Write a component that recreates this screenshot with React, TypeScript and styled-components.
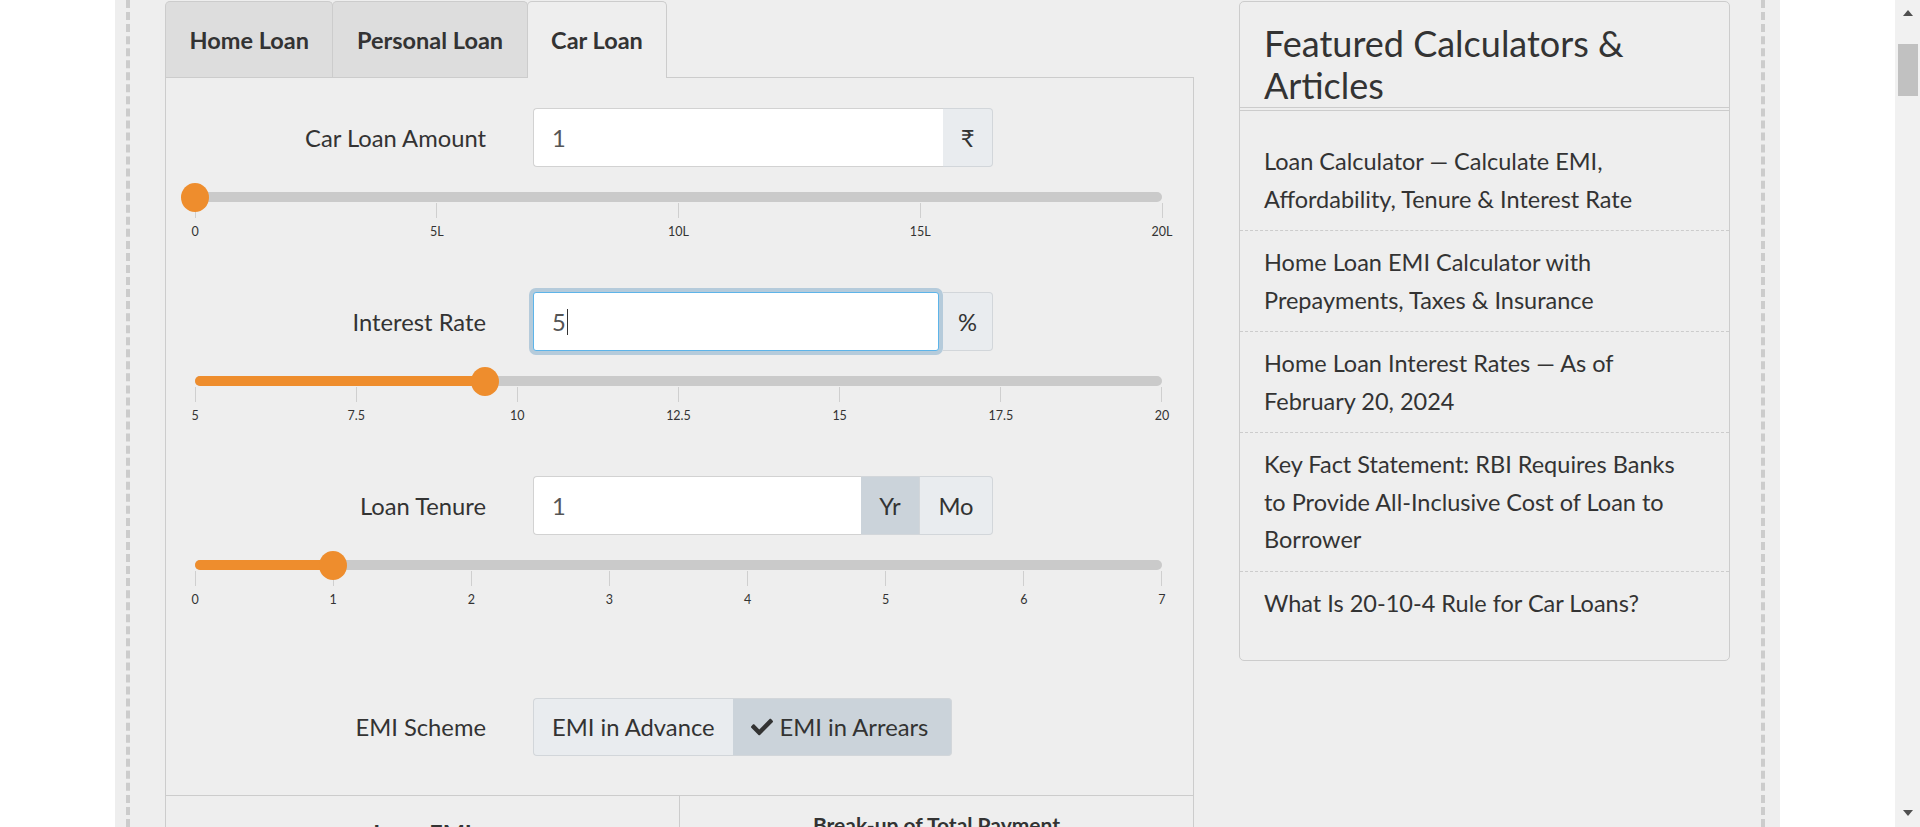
import React from 'react'
import styled, { createGlobalStyle, css } from 'styled-components'
import { FaCheck } from 'react-icons/fa'

const GlobalStyle = createGlobalStyle`
  html, body {
    margin: 0;
    padding: 0;
    height: 100%;
    overflow: hidden;
    background: #ffffff;
  }
  body {
    font-family: Lato, 'Noto Sans', 'DejaVu Sans', sans-serif;
    color: #333333;
  }
  * {
    box-sizing: border-box;
  }
`

const accent = '#ee8d2d'
const line = '#cccccc'

const Screen = styled.div`
  display: flex;
  width: 1920px;
  height: 827px;
  overflow: hidden;
`

const Viewport = styled.div`
  flex: 1;
  min-width: 0;
  display: flex;
  justify-content: center;
`

const Wrapper = styled.div`
  width: 1665px;
  height: 100%;
  background: #eeeeee;
  padding: 0 15px 0 11px;
`

const Inner = styled.div`
  height: 100%;
  display: flex;
  align-items: flex-start;
  gap: 45px;
  padding: 1px 31px 0 35px;
  border-left: 4px dashed ${line};
  border-right: 4px dashed ${line};
`

const Main = styled.section`
  width: 1029px;
  flex-shrink: 0;
`

const Tabs = styled.ul`
  display: flex;
  margin: 0;
  padding: 0;
  list-style: none;
`

const Tab = styled.li<{ $active?: boolean }>`
  position: relative;
  display: flex;
  align-items: center;
  height: 76px;
  padding: 0 23.5px;
  margin-right: -1px;
  font-size: 23.5px;
  font-weight: 700;
  color: #333;
  background: #dddddd;
  border: 1px solid ${line};
  border-bottom: none;
  border-radius: 5px 5px 0 0;

  ${props =>
    props.$active &&
    css`
      z-index: 1;
      height: 77px;
      margin-bottom: -1px;
      background: #eeeeee;
    `}
`

const Panel = styled.div`
  border: 1px solid ${line};
  border-bottom: none;
  padding-top: 30px;
`

const Control = styled.div`
  margin-bottom: 52px;
`

const FormRow = styled.div<{ $offset?: number }>`
  display: grid;
  grid-template-columns: 320px 460px;
  column-gap: 47px;
  align-items: center;
  margin-top: ${props => props.$offset || 0}px;
`

const Label = styled.label`
  text-align: right;
  font-size: 23.75px;
  color: #333;
`

const InputGroup = styled.div`
  display: flex;
  height: 59px;
`

const Field = styled.div<{ $focused?: boolean }>`
  flex: 1;
  display: flex;
  align-items: center;
  padding: 0 18px;
  font-size: 23.75px;
  color: #555;
  background: #ffffff;
  border: 1px solid #d2d2d2;
  border-right: none;
  border-radius: 4px 0 0 4px;

  ${props =>
    props.$focused &&
    css`
      position: relative;
      z-index: 1;
      margin-right: 4px;
      border: 1px solid #5db4e9;
      border-radius: 3px;
      box-shadow: 0 0 0 4px rgba(110, 160, 195, 0.45);
    `}
`

const Caret = styled.span`
  display: inline-block;
  width: 1px;
  height: 26px;
  margin-left: 1px;
  background: #333;
`

const Addon = styled.div<{ $width: number; $active?: boolean; $last?: boolean }>`
  display: flex;
  align-items: center;
  justify-content: center;
  width: ${props => props.$width}px;
  font-size: 23.75px;
  color: #333;
  background: ${props => (props.$active ? '#cbd3da' : '#e9ecef')};
  border: 1px solid #d2d6da;
  border-left: none;
  ${props =>
    props.$last &&
    css`
      border-radius: 0 4px 4px 0;
    `}
`

const Slider = styled.div`
  padding: 0 31px 0 29px;
`

const Track = styled.div`
  position: relative;
  height: 10px;
  margin-top: 25px;
  border-radius: 5px;
  background: #cacaca;
`

const Fill = styled.div`
  position: absolute;
  left: 0;
  top: 0;
  bottom: 0;
  border-radius: 5px;
  background: ${accent};
`

const Thumb = styled.div`
  position: absolute;
  top: 50%;
  width: 28px;
  height: 29px;
  margin-left: -14px;
  margin-top: -14.5px;
  border-radius: 50%;
  background: ${accent};
`

const Ticks = styled.div`
  display: flex;
  justify-content: space-between;
  margin-top: 1px;
`

const Tick = styled.div`
  width: 0;
  display: flex;
  flex-direction: column;
  align-items: center;
`

const TickLine = styled.span`
  width: 1px;
  height: 15px;
  background: #cfcfcf;
`

const TickLabel = styled.span`
  margin-top: 6px;
  font-size: 12.5px;
  line-height: 16px;
  white-space: nowrap;
  color: #333;
`

const ButtonGroup = styled.div`
  display: flex;
  height: 58px;
`

const SchemeButton = styled.div<{ $active?: boolean }>`
  display: flex;
  align-items: center;
  gap: 7px;
  padding: 0 18px;
  font-size: 23.75px;
  color: #333;
  background: ${props => (props.$active ? '#cbd3da' : '#e9ecef')};
  border: 1px solid #d2d6da;

  &:first-child {
    border-right: none;
    border-radius: 4px 0 0 4px;
  }
  &:last-child {
    border-left: none;
    border-radius: 0 4px 4px 0;
    padding-right: 23px;
  }
`

const Results = styled.div`
  display: grid;
  grid-template-columns: 513px 1fr;
  margin-top: 39px;
  border-top: 1px solid ${line};
`

const ResultCol = styled.div<{ $divider?: boolean; $pad: number }>`
  height: 120px;
  padding-top: ${props => props.$pad}px;
  text-align: center;
  ${props =>
    props.$divider &&
    css`
      border-left: 1px solid ${line};
    `}
`

const ResultTitle = styled.h4<{ $size: number }>`
  margin: 0;
  font-size: ${props => props.$size}px;
  line-height: 1.2;
  font-weight: 700;
  color: #333;
`

const Sidebar = styled.aside`
  width: 491px;
  flex-shrink: 0;
  border: 1px solid ${line};
  border-radius: 5px;
`

const SidebarHeader = styled.div`
  padding: 20px 24px 1px;
  border-bottom: 1px solid ${line};
  margin-bottom: 2px;
`

const SidebarTitle = styled.h3`
  margin: 0;
  font-size: 36px;
  line-height: 42px;
  font-weight: 400;
  color: #333;
`

const ArticleList = styled.ul`
  margin: 0;
  padding: 19px 0 26px;
  list-style: none;
  border-top: 1px solid ${line};
`

const Article = styled.li`
  padding: 13px 30px 12px 24px;
  font-size: 23.5px;
  line-height: 37.5px;
  color: #333;

  & + & {
    border-top: 1px dashed ${line};
  }
`

const ScrollBar = styled.div`
  width: 25px;
  flex-shrink: 0;
  display: flex;
  flex-direction: column;
  align-items: center;
  background: #f1f1f1;
`

const ScrollArrow = styled.div<{ $down?: boolean }>`
  width: 0;
  height: 0;
  margin: ${props => (props.$down ? 'auto 0 11px' : '10px 0 0')};
  border-left: 5px solid transparent;
  border-right: 5px solid transparent;
  ${props =>
    props.$down
      ? css`
          border-top: 6px solid #505050;
        `
      : css`
          border-bottom: 6px solid #505050;
        `}
`

const ScrollThumb = styled.div`
  width: 20px;
  height: 52px;
  margin-top: 28px;
  background: #c1c1c1;
`

type Range = {
  label: string
  value: string
  focused?: boolean
  addons: { text: string; width: number; active?: boolean }[]
  ticks: string[]
  position: number
}

const ranges: Range[] = [
  {
    label: 'Car Loan Amount',
    value: '1',
    addons: [{ text: '₹', width: 50 }],
    ticks: ['0', '5L', '10L', '15L', '20L'],
    position: 0
  },
  {
    label: 'Interest Rate',
    value: '5',
    focused: true,
    addons: [{ text: '%', width: 50 }],
    ticks: ['5', '7.5', '10', '12.5', '15', '17.5', '20'],
    position: 0.2996
  },
  {
    label: 'Loan Tenure',
    value: '1',
    addons: [
      { text: 'Yr', width: 59, active: true },
      { text: 'Mo', width: 73 }
    ],
    ticks: ['0', '1', '2', '3', '4', '5', '6', '7'],
    position: 1 / 7
  }
]

const articles = [
  'Loan Calculator — Calculate EMI, Affordability, Tenure & Interest Rate',
  'Home Loan EMI Calculator with Prepayments, Taxes & Insurance',
  'Home Loan Interest Rates — As of February 20, 2024',
  'Key Fact Statement: RBI Requires Banks to Provide All-Inclusive Cost of Loan to Borrower',
  'What Is 20-10-4 Rule for Car Loans?'
]

const RangeControl: React.FC<{ range: Range }> = ({ range }) => {
  const pct = `${range.position * 100}%`
  return (
    <Control>
      <FormRow>
        <Label>{range.label}</Label>
        <InputGroup>
          <Field $focused={range.focused}>
            {range.value}
            {range.focused && <Caret />}
          </Field>
          {range.addons.map((addon, i) => (
            <Addon
              key={addon.text}
              $width={addon.width}
              $active={addon.active}
              $last={i === range.addons.length - 1}
            >
              {addon.text}
            </Addon>
          ))}
        </InputGroup>
      </FormRow>
      <Slider>
        <Track>
          {range.position > 0 && <Fill style={{ width: pct }} />}
          <Thumb style={{ left: pct }} />
        </Track>
        <Ticks>
          {range.ticks.map(tick => (
            <Tick key={tick}>
              <TickLine />
              <TickLabel>{tick}</TickLabel>
            </Tick>
          ))}
        </Ticks>
      </Slider>
    </Control>
  )
}

export default function App() {
  return (
    <>
      <GlobalStyle />
      <Screen>
        <Viewport>
          <Wrapper>
            <Inner>
              <Main>
                <Tabs>
                  <Tab>Home Loan</Tab>
                  <Tab>Personal Loan</Tab>
                  <Tab $active>Car Loan</Tab>
                </Tabs>
                <Panel>
                  {ranges.map(range => (
                    <RangeControl key={range.label} range={range} />
                  ))}
                  <FormRow $offset={90}>
                    <Label>EMI Scheme</Label>
                    <ButtonGroup>
                      <SchemeButton>EMI in Advance</SchemeButton>
                      <SchemeButton $active>
                        <FaCheck size={22} />
                        EMI in Arrears
                      </SchemeButton>
                    </ButtonGroup>
                  </FormRow>
                  <Results>
                    <ResultCol $pad={23}>
                      <ResultTitle $size={23.5}>Loan EMI</ResultTitle>
                    </ResultCol>
                    <ResultCol $divider $pad={16}>
                      <ResultTitle $size={21}>Break-up of Total Payment</ResultTitle>
                    </ResultCol>
                  </Results>
                </Panel>
              </Main>
              <Sidebar>
                <SidebarHeader>
                  <SidebarTitle>Featured Calculators &amp; Articles</SidebarTitle>
                </SidebarHeader>
                <ArticleList>
                  {articles.map(article => (
                    <Article key={article}>{article}</Article>
                  ))}
                </ArticleList>
              </Sidebar>
            </Inner>
          </Wrapper>
        </Viewport>
        <ScrollBar>
          <ScrollArrow />
          <ScrollThumb />
          <ScrollArrow $down />
        </ScrollBar>
      </Screen>
    </>
  )
}
